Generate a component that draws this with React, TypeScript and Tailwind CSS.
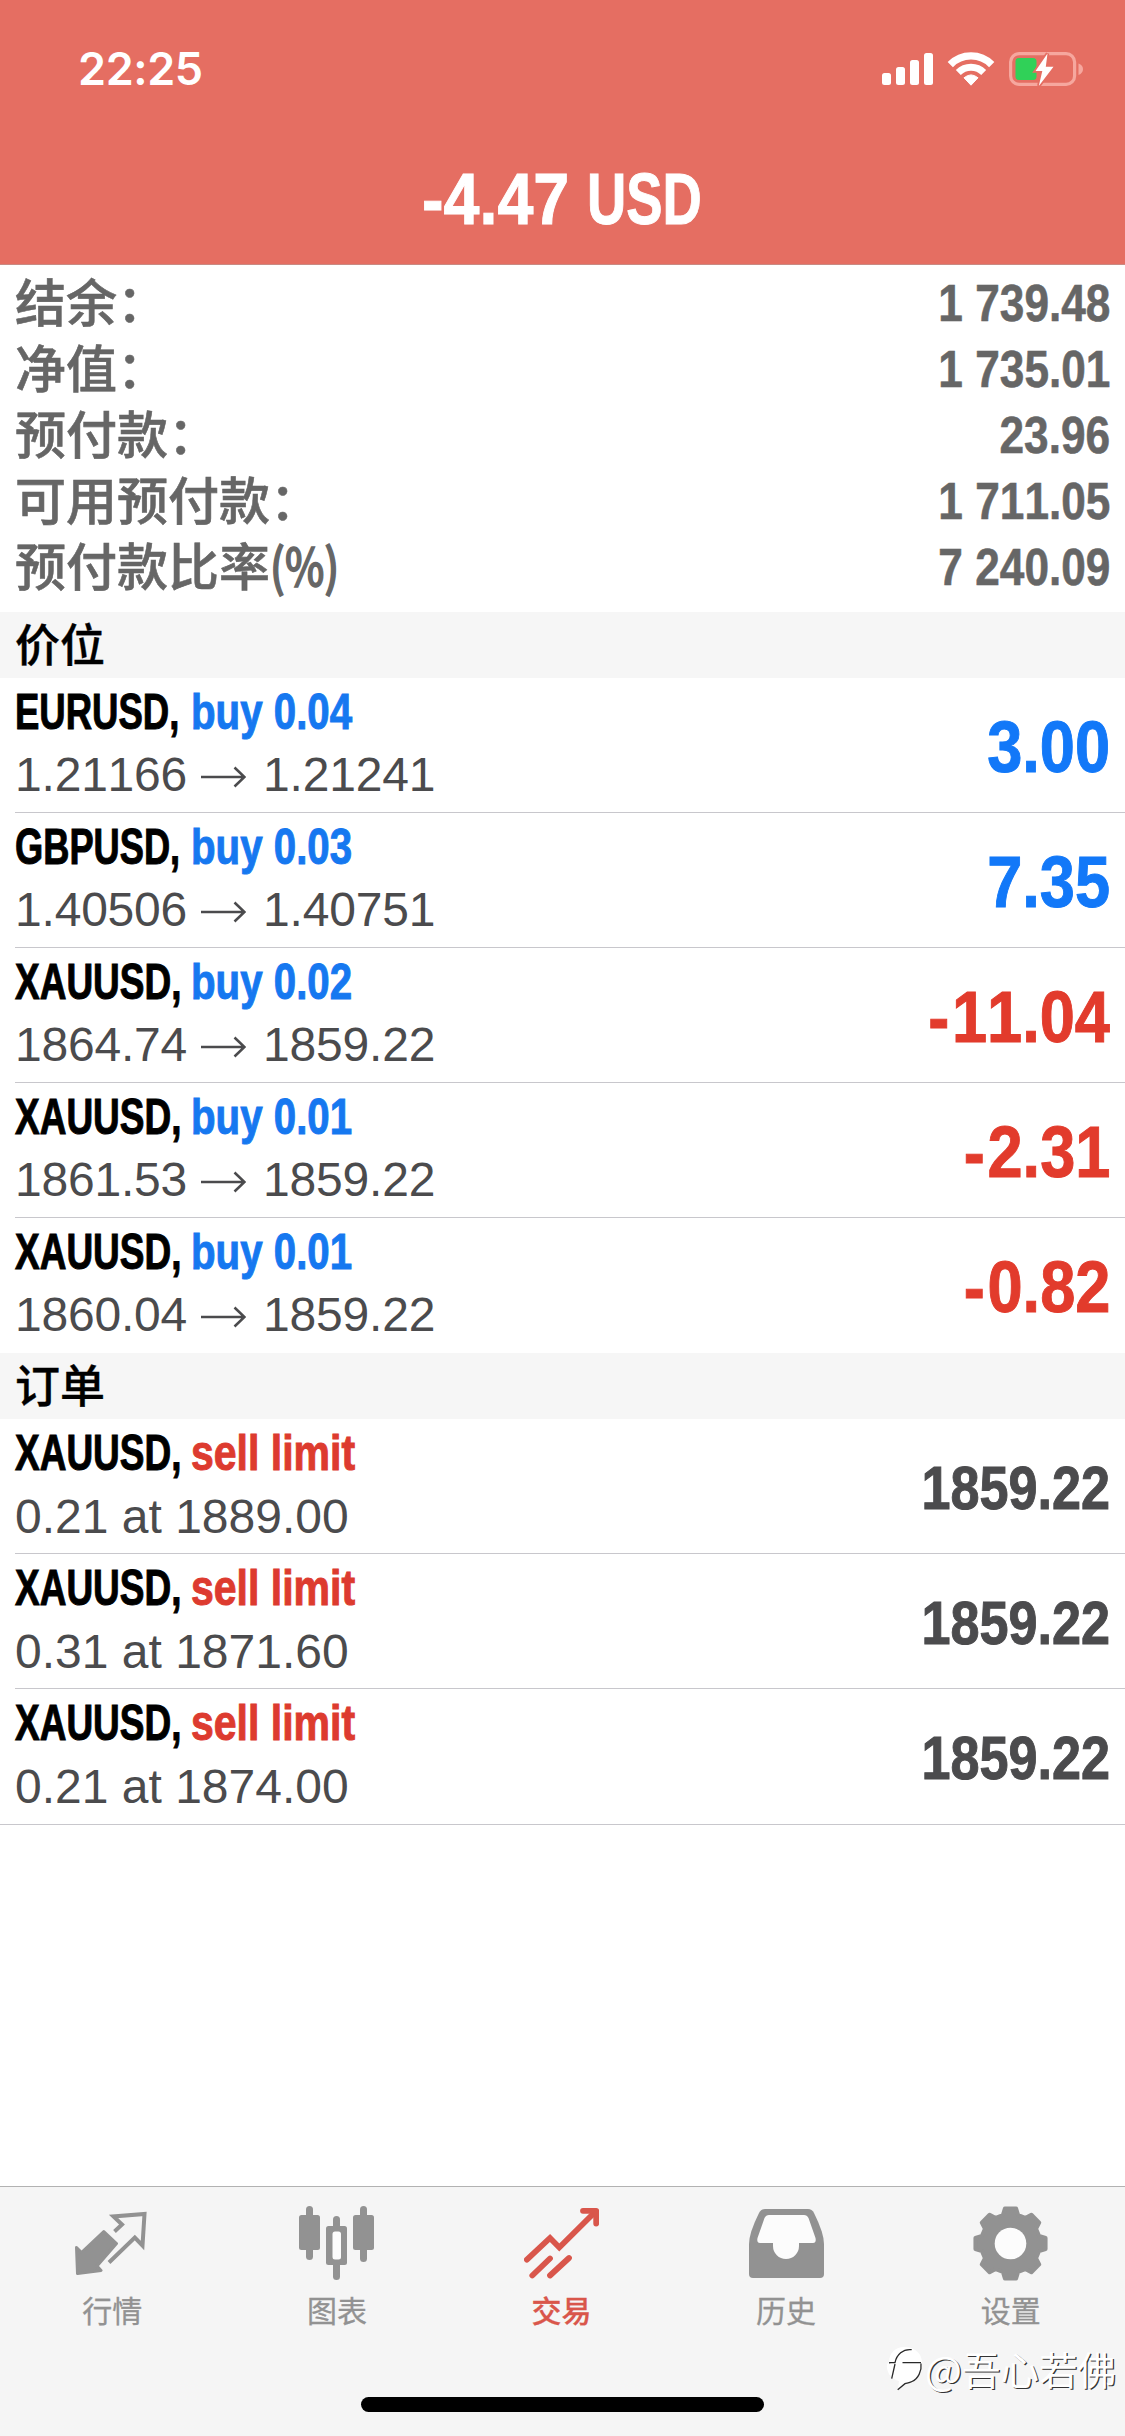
import type { ReactNode } from "react";

const LATIN = "font-['Liberation_Sans',Arial,sans-serif] [font-kerning:none]";
const CJK = "font-['Noto_Sans_CJK_SC','Liberation_Sans',sans-serif]";

const summary = [
  { label: "结余：", value: "1 739.48" },
  { label: "净值：", value: "1 735.01" },
  { label: "预付款：", value: "23.96" },
  { label: "可用预付款：", value: "1 711.05" },
  { label: "预付款比率", suffix: "(%)", value: "7 240.09" },
];

const positions = [
  { symbol: "EURUSD,", side: "buy 0.04", from: "1.21166", to: "1.21241", profit: "3.00" },
  { symbol: "GBPUSD,", side: "buy 0.03", from: "1.40506", to: "1.40751", profit: "7.35" },
  { symbol: "XAUUSD,", side: "buy 0.02", from: "1864.74", to: "1859.22", profit: "-11.04" },
  { symbol: "XAUUSD,", side: "buy 0.01", from: "1861.53", to: "1859.22", profit: "-2.31" },
  { symbol: "XAUUSD,", side: "buy 0.01", from: "1860.04", to: "1859.22", profit: "-0.82" },
];

const orders = [
  { symbol: "XAUUSD,", detail: "0.21 at 1889.00", price: "1859.22" },
  { symbol: "XAUUSD,", detail: "0.31 at 1871.60", price: "1859.22" },
  { symbol: "XAUUSD,", detail: "0.21 at 1874.00", price: "1859.22" },
];

function StatusIcons() {
  return (
    <svg width="202" height="36" viewBox="0 0 202 36" fill="none">
      <g fill="#fff">
        <rect x="1" y="22" width="9" height="12" rx="2.5" />
        <rect x="15" y="16" width="9" height="18" rx="2.5" />
        <rect x="29" y="9" width="9" height="25" rx="2.5" />
        <rect x="43" y="2" width="9" height="32" rx="2.5" />
        <path d="M90 34.2 L83 26.8 Q90 21 97 26.8 Z" stroke="#fff" strokeWidth="1" strokeLinejoin="round" />
      </g>
      <path d="M69.3 13.6 A29 29 0 0 1 110.7 13.6" stroke="#fff" strokeWidth="7.4" />
      <path d="M77.3 21.4 A18 18 0 0 1 102.7 21.4" stroke="#fff" strokeWidth="7" />
      <rect x="129.6" y="2.6" width="64" height="30.8" rx="8.5" stroke="#f6a79e" strokeWidth="3.2" />
      <path d="M197.500 12.500 Q202 14 202 18 Q202 22 197.500 24 Z" fill="#f6a79e" />
      <rect x="134.500" y="7" width="21" height="22" rx="3.5" fill="#30d158" />
      <path
        d="M166.500 2.500 L154.500 20 H161.300 L157.800 35 L172.500 15.700 H164.800 Z"
        fill="#fff"
        stroke="#e56e62"
        strokeWidth="3.500"
        paintOrder="stroke"
      />
    </svg>
  );
}

function Header() {
  return (
    <header className="h-[265px] border-b border-[#c98a83] bg-[#e56e62] text-white">
      <div className="flex h-[138px] items-center justify-between pl-[78px] pr-[42px]">
        <span className="font-['Inter',sans-serif] text-[45px] font-semibold leading-[138px] tracking-[-0.4px]">22:25</span>
        <StatusIcons />
      </div>
      <div className={`${LATIN} flex h-[122px] justify-center text-[73px] font-bold leading-[122px] [-webkit-text-stroke:1px]`}>
        <span className="w-[165px]">
          <span className="inline-block origin-left scale-x-[0.885]">-4.47</span>
        </span>
        <span className="w-[116px]">
          <span className="inline-block origin-left scale-x-[0.745]">USD</span>
        </span>
      </div>
    </header>
  );
}

function Summary() {
  return (
    <section className="h-[347px] pl-[15px] pr-[15px] pt-[5px] text-[#666]">
      {summary.map((row) => (
        <div key={row.label} className="flex h-[66px] justify-between">
          <span className={`${CJK} whitespace-nowrap text-[51px] font-medium leading-[61px] [-webkit-text-stroke:0.6px]`}>
            {row.label}
            {row.suffix && <span className="inline-block origin-left scale-x-[0.82] [-webkit-text-stroke:1.5px]">{row.suffix}</span>}
          </span>
          <span className={`${LATIN} inline-block origin-right scale-x-[0.85] text-[52px] font-bold leading-[66px] [-webkit-text-stroke:0.6px]`}>
            {row.value}
          </span>
        </div>
      ))}
    </section>
  );
}

function SectionTitle({ children }: { children: ReactNode }) {
  return (
    <h2 className={`${CJK} h-[66px] bg-[#f6f6f6] pl-[15px] text-[45px] font-medium leading-[62px] text-black [-webkit-text-stroke:0.4px]`}>
      {children}
    </h2>
  );
}

function SymbolLine({ symbol, action, isSell }: { symbol: string; action: string; isSell?: boolean }) {
  const symbolFit = symbol.startsWith("EUR")
    ? "scale-x-[0.73]"
    : symbol.startsWith("GBP")
      ? "scale-x-[0.725]"
      : "scale-x-[0.74]";
  return (
    <div className="flex h-[60px] text-[50px] font-bold leading-[61px] [-webkit-text-stroke:1px]">
      <span className="w-[176px] text-black">
        <span className={`inline-block origin-left ${symbolFit}`}>{symbol}</span>
      </span>
      {isSell ? (
        <span className="inline-block origin-left scale-x-[0.82] whitespace-nowrap text-[#dd3b2f]">{action}</span>
      ) : (
        <span className="inline-block origin-left scale-x-[0.805] whitespace-nowrap text-[#1678f0]">{action}</span>
      )}
    </div>
  );
}

function Row({ children, value, valueClass }: { children: ReactNode; value: string; valueClass: string }) {
  const negative = value.startsWith("-");
  return (
    <div className="flex h-full justify-between pr-[15px] pt-1">
      <div>{children}</div>
      <span className={`inline-block origin-right font-bold leading-[130px] [-webkit-text-stroke:1px] ${valueClass}`}>
        {negative ? <span className="tracking-[3px]">-</span> : null}
        {negative ? value.slice(1) : value}
      </span>
    </div>
  );
}

function Arrow() {
  return (
    <svg className="ml-[14px] mr-[17px] mt-[3px]" width="45" height="22" viewBox="0 0 45 22" fill="none" stroke="#4b4b4d" strokeWidth="2.600">
      <path d="M0 11 H43.500 M33.500 1.500 L43.500 11 L33.500 20.500" />
    </svg>
  );
}

function Positions() {
  return (
    <section className={`${LATIN} pl-[15px]`}>
      {positions.map((p, i) => (
        <div key={i} className="h-[135px] border-b border-[#c8c7cc] last:border-b-0">
          <Row
            value={p.profit}
            valueClass={
              p.profit.startsWith("-")
                ? "text-[73px] scale-x-[0.865] text-[#e23b2c]"
                : "text-[73px] scale-x-[0.865] text-[#1278f8]"
            }
          >
            <SymbolLine symbol={p.symbol} action={p.side} />
            <div className="flex h-[66px] items-center text-[48px] leading-[66px] tracking-[-0.2px] text-[#4b4b4d]">
              <span>{p.from}</span>
              <Arrow />
              <span>{p.to}</span>
            </div>
          </Row>
        </div>
      ))}
    </section>
  );
}

function Orders() {
  return (
    <section className={`${LATIN} border-b border-[#c8c7cc]`}>
      {orders.map((o, i) => (
        <div key={i} className="ml-[15px] h-[135px] border-b border-[#c8c7cc] last:border-b-0">
          <Row value={o.price} valueClass="text-[62px] scale-x-[0.842] text-[#4b4b4d]">
            <SymbolLine symbol={o.symbol} action="sell limit" isSell />
            <div className="h-[66px] text-[48px] leading-[67px] text-[#4b4b4d]">{o.detail}</div>
          </Row>
        </div>
      ))}
    </section>
  );
}

const GREY = "#929292";

function QuotesIcon() {
  return (
    <svg width="75" height="75" viewBox="0 0 75 75">
      <path
        d="M39.500 25.500 L47 18.500 L38.500 10.500 L69.500 8 L67.500 39.500 L59.800 31.500 L34 56.500"
        fill="none"
        stroke={GREY}
        strokeWidth="4"
      />
      <path
        d="M1.500 41.500 L6.500 46.500 L28.800 25.500 L41.500 37.500 L22 60 L26 64.500 L2.500 67.500 Z"
        fill={GREY}
        stroke={GREY}
        strokeWidth="3"
        strokeLinejoin="round"
      />
    </svg>
  );
}

function ChartIcon() {
  return (
    <svg width="75" height="75" viewBox="0 0 75 75" fill={GREY}>
      <rect x="7" y="0" width="7" height="54" rx="3.500" />
      <rect x="0" y="9" width="21" height="35" rx="2.500" />
      <rect x="34" y="10" width="7" height="64" rx="3.500" />
      <rect x="27" y="20" width="21" height="39" rx="2.500" />
      <rect x="33.500" y="25.500" width="8.500" height="28" rx="2.500" fill="#fcfcfc" />
      <rect x="61" y="0" width="7" height="56" rx="3.500" />
      <rect x="54" y="9" width="21" height="35" rx="2.500" />
    </svg>
  );
}

function TradeIcon() {
  return (
    <svg width="75" height="75" viewBox="0 0 75 75" fill="none" stroke="#d9564b" strokeWidth="5.800">
      <path d="M2.900 53.700 L26 32 L35.300 41.500 L71.500 5.500" strokeLinecap="round" />
      <path d="M59 4.800 H72.200 V17.500" strokeLinecap="round" strokeLinejoin="round" />
      <path d="M8.300 69.500 L26 52.500 M26 69.500 L45 52" strokeLinecap="round" />
    </svg>
  );
}

function HistoryIcon() {
  return (
    <svg width="75" height="75" viewBox="0 0 75 75">
      <path d="M16 3 H59 Q63 3 65 7 Q75 27 75 38 V68 Q75 72 71 72 H4 Q0 72 0 68 V38 Q0 27 10 7 Q12 3 16 3 Z" fill={GREY} />
      <path
        d="M20 9 H55 Q58 9 59.500 12 L66.500 32 Q67.500 37 64 37 H50 V40 A13 13 0 0 1 24 40 V37 H11 Q7.500 37 8.500 32 L15.500 12 Q17 9 20 9 Z"
        fill="#fcfcfc"
      />
    </svg>
  );
}

function SettingsIcon() {
  const points = Array.from({ length: 8 }, (_, tooth) =>
    [
      [-15, 29.5],
      [-9, 35.5],
      [9, 35.5],
      [15, 29.5],
    ].map(([offset, radius]) => {
      const angle = ((tooth * 45 + offset) * Math.PI) / 180;
      return `${37.5 + radius * Math.cos(angle)},${37.5 + radius * Math.sin(angle)}`;
    }),
  )
    .flat()
    .join(" ");
  return (
    <svg width="75" height="75" viewBox="0 0 75 75">
      <polygon points={points} fill={GREY} stroke={GREY} strokeWidth="4" strokeLinejoin="round" />
      <circle cx="37.500" cy="37.500" r="15.800" fill="#fcfcfc" />
    </svg>
  );
}

const tabs = [
  { label: "行情", icon: <QuotesIcon /> },
  { label: "图表", icon: <ChartIcon /> },
  { label: "交易", icon: <TradeIcon />, active: true },
  { label: "历史", icon: <HistoryIcon /> },
  { label: "设置", icon: <SettingsIcon /> },
];

function Watermark() {
  return (
    <div
      className={`${CJK} absolute right-[9px] top-[157px] flex items-center text-[38.5px] leading-[48px] text-white [text-shadow:1.2px_1.2px_0.5px_#333]`}
    >
      <svg width="40" height="48" viewBox="0 0 40 48" fill="none">
        <path d="M4 18 C4 8 12 2 21 3 C31 4 37 10 37 19 C37 30 31 37 21 39 L13 45 L14 37 C5 35 1 27 2 20 Z" fill="#fff" />
        <path
          d="M4.700 19.500 V18.700 H10 C11.500 11 18 4.500 26.700 5.700 M17.500 18.700 H36 M36 19.500 C37 27 33 35 27 37.500 C24 39 22 39 20 39.700 L12.700 45.700 M10 20 L6.700 34.700"
          stroke="#2a2a2a"
          strokeWidth="1.300"
        />
      </svg>
      <span className="text-[39px]">@</span>
      <span>吾心若佛</span>
    </div>
  );
}

function TabBar() {
  return (
    <nav className="relative flex h-[250px] flex-col border-t border-[#b2b2b2] bg-[#f5f5f5]">
      <div className="mr-[2px] grid grid-cols-5 pt-[19px]">
        {tabs.map((tab) => (
          <div key={tab.label} className="flex flex-col items-center">
            {tab.icon}
            <span
              className={`${CJK} mt-[8px] text-[30px] leading-[40px] [-webkit-text-stroke:0.3px] ${tab.active ? "font-medium text-[#d9564b]" : "text-[#929292]"}`}
            >
              {tab.label}
            </span>
          </div>
        ))}
      </div>
      <div className="mx-auto mb-6 mt-auto h-[15px] w-[403px] rounded-full bg-black" />
      <Watermark />
    </nav>
  );
}

export default function App() {
  return (
    <main className="flex h-[2436px] w-[1125px] flex-col overflow-hidden bg-white">
      <Header />
      <Summary />
      <SectionTitle>价位</SectionTitle>
      <Positions />
      <SectionTitle>订单</SectionTitle>
      <Orders />
      <div className="grow" />
      <TabBar />
    </main>
  );
}
